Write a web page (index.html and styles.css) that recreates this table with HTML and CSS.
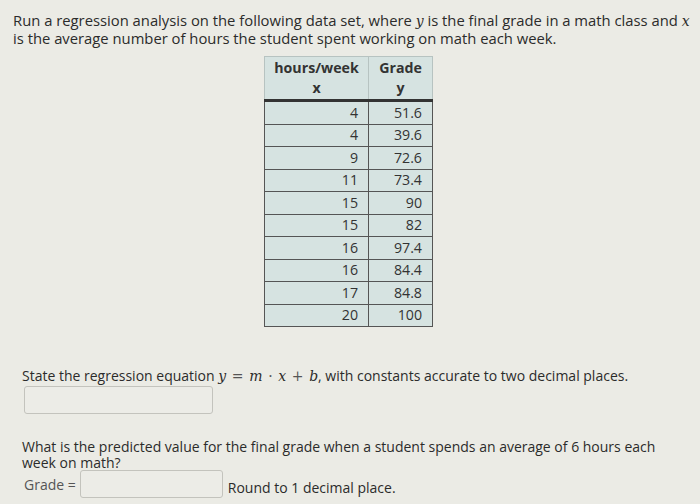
FILE: index.html
```html
<!DOCTYPE html>
<html>
<head>
<meta charset="utf-8">
<link rel="stylesheet" href="styles.css">
</head>
<body>
<div class="page">
  <p class="intro">Run a regression analysis on the following data set, where <i class="m">y</i> is the final grade in a math class and <i class="m">x</i><br>is the average number of hours the student spent working on math each week.</p>
  <table class="data">
    <thead>
      <tr><th class="c1">hours/week<br>x</th><th class="c2">Grade<br>y</th></tr>
    </thead>
    <tbody>
      <tr><td>4</td><td>51.6</td></tr>
      <tr><td>4</td><td>39.6</td></tr>
      <tr><td>9</td><td>72.6</td></tr>
      <tr><td>11</td><td>73.4</td></tr>
      <tr><td>15</td><td>90</td></tr>
      <tr><td>15</td><td>82</td></tr>
      <tr><td>16</td><td>97.4</td></tr>
      <tr><td>16</td><td>84.4</td></tr>
      <tr><td>17</td><td>84.8</td></tr>
      <tr><td>20</td><td>100</td></tr>
    </tbody>
  </table>
  <div class="q1">
    <p class="qtext">State the regression equation <i class="m">y</i> <span class="op">=</span> <i class="m">m</i> <span class="op">·</span> <i class="m">x</i> <span class="op">+</span> <i class="m">b</i>, with constants accurate to two decimal places.</p>
    <div class="box box1"></div>
  </div>
  <div class="q2">
    <p class="qtext">What is the predicted value for the final grade when a student spends an average of 6 hours each</p>
    <p class="qtext">week on math?</p>
    <div class="row">
      <span class="lbl">Grade =</span>
      <div class="box box2"></div>
      <span class="note">Round to 1 decimal place.</span>
    </div>
  </div>
</div>
</body>
</html>
```
FILE: styles.css
```css
html, body {
  margin: 0;
  padding: 0;
  background: #ebebe5;
}
.page {
  width: 700px;
  height: 504px;
  overflow: hidden;
  font-family: "Open Sans", "Noto Sans", sans-serif;
  font-size: 14px;
  color: #2b2b2b;
  box-sizing: border-box;
  padding: 12px 0 0 13px;
}
.intro {
  margin: 0;
  font-size: 14.8px;
  line-height: 17px;
  white-space: nowrap;
}
.m {
  font-family: "DejaVu Serif", "Liberation Serif", serif;
  font-style: italic;
  font-size: 14px;
}
.op {
  font-family: "DejaVu Serif", "Liberation Serif", serif;
  color: #555;
  padding: 0 2px;
}
.data {
  border-collapse: collapse;
  margin: 9px 0 0 251px;
  background: #d6e3e1;
  color: #333;
  font-size: 14.2px;
}
.data th {
  border: 1px solid #b7c3c1;
  border-bottom: 3px solid #333;
  font-weight: bold;
  line-height: 20px;
  padding: 1px 0 1px;
  text-align: center;
}
.data th.c1 { width: 103px; }
.data th.c2 { width: 63px; }
.data td {
  border: 1px solid #555;
  height: 21.5px;
  padding: 0 10px 0 0;
  text-align: right;
  line-height: 20px;
}
.data td + td { padding-right: 10px; }
.q1 {
  margin: 41px 0 0 9px;
}
.qtext {
  margin: 0;
  height: 16px;
  line-height: 16px;
  white-space: nowrap;
}
.box {
  background: #ececE7;
  border: 1px solid #c3c3bd;
  border-radius: 3px;
  box-sizing: border-box;
}
.box1 {
  width: 189px;
  height: 28px;
  margin: 2px 0 0 2px;
}
.q2 {
  margin: 25px 0 0 9px;
}
.row {
  display: flex;
  align-items: center;
  margin-top: -1px;
}
.lbl { color: #555; margin-left: 2px; }
.box2 {
  width: 143px;
  height: 28px;
  margin: 0 5px 0 4px;
}
.note { padding-top: 6px; }
```
